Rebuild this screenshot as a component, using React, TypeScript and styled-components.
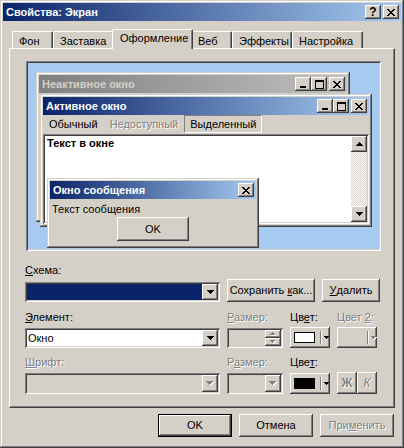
import React from "react";
import styled, { createGlobalStyle, css } from "styled-components";

const FACE = "#d4d0c8";
const SHADOW = "#808080";
const DARK = "#404040";
const LIGHT = "#ffffff";

const raised = css`
  box-shadow:
    inset -1px -1px ${DARK},
    inset 1px 1px ${LIGHT},
    inset -2px -2px ${SHADOW};
`;

const frame = css`
  box-shadow:
    inset -1px -1px ${DARK},
    inset 1px 1px ${FACE},
    inset -2px -2px ${SHADOW},
    inset 2px 2px ${LIGHT};
`;

const sunken = css`
  box-shadow:
    inset 1px 1px ${SHADOW},
    inset -1px -1px ${LIGHT},
    inset 2px 2px ${DARK},
    inset -2px -2px ${FACE};
`;

const disabledText = css`
  color: ${SHADOW};
  text-shadow: 1px 1px ${LIGHT};
`;

const GlobalStyle = createGlobalStyle`
  html, body { margin: 0; padding: 0; background: #fff; }
  body {
    font-family: "Liberation Sans", Arial, sans-serif;
    font-size: 11px;
    line-height: 13px;
    color: #000;
  }
  * { box-sizing: border-box; }
`;

// pixel glyphs for the caption and arrow buttons
const CLOSE = ["##....##", ".##..##.", "..####..", "...##...", "..####..", ".##..##.", "##....##"];
const MINIMIZE = ["......", "......", "......", "......", "......", "######", "######"];
const MAXIMIZE = [
  "#########",
  "#########",
  "#.......#",
  "#.......#",
  "#.......#",
  "#.......#",
  "#.......#",
  "#.......#",
  "#########",
];
const DOWN = ["#######", ".#####.", "..###..", "...#..."];
const UP = [...DOWN].reverse();
const SMALL_DOWN = ["#####", ".###.", "..#.."];
const SMALL_UP = [...SMALL_DOWN].reverse();

const PixSvg = styled.svg`
  display: block;
  flex: none;
`;

const Pix = ({ rows, emboss }: { rows: string[]; emboss?: boolean }) => {
  const cells: [number, number][] = [];
  rows.forEach((r, y) => [...r].forEach((c, x) => c === "#" && cells.push([x, y])));
  const extra = emboss ? 1 : 0;
  return (
    <PixSvg width={rows[0].length + extra} height={rows.length + extra} shapeRendering="crispEdges">
      {emboss &&
        cells.map(([x, y]) => <rect key={`e${x}-${y}`} x={x + 1} y={y + 1} width={1} height={1} fill={LIGHT} />)}
      {cells.map(([x, y]) => (
        <rect key={`${x}-${y}`} x={x} y={y} width={1} height={1} fill={emboss ? SHADOW : "#000"} />
      ))}
    </PixSvg>
  );
};

const Dialog = styled.div`
  width: 404px;
  height: 448px;
  padding: 3px;
  background: ${FACE};
  display: flex;
  flex-direction: column;
  ${frame}
`;

const TitleBar = styled.div<{ $inactive?: boolean }>`
  flex: none;
  height: 18px;
  display: flex;
  align-items: center;
  padding: 0 2px 0 3px;
  background: ${(p) =>
    p.$inactive
      ? `linear-gradient(to right, ${SHADOW}, #c0c0c0)`
      : "linear-gradient(to right, #0a246a, #a6caf0)"};
  color: ${(p) => (p.$inactive ? FACE : LIGHT)};
  font-weight: bold;
  white-space: nowrap;
`;

const TitleText = styled.span`
  flex: 1;
  overflow: hidden;
`;

const CaptionButtons = styled.div`
  display: flex;
  gap: 2px;
`;

const CaptionGroup = styled.div`
  display: flex;
`;

const CaptionButton = styled.div`
  width: 16px;
  height: 14px;
  display: flex;
  align-items: center;
  justify-content: center;
  background: ${FACE};
  color: #000;
  font-weight: bold;
  font-size: 12px;
  ${raised}
`;

const Body = styled.div`
  flex: 1;
  display: flex;
  flex-direction: column;
  padding: 8px 6px 0 6px;
`;

const TabRow = styled.div`
  display: flex;
  align-items: flex-end;
  height: 20px;
  margin-bottom: -1px;
  padding-left: 3px;
  position: relative;
  z-index: 1;
`;

const Tab = styled.div<{ $w: number; $active?: boolean }>`
  width: ${(p) => (p.$active ? p.$w + 4 : p.$w)}px;
  height: ${(p) => (p.$active ? 20 : 17)}px;
  margin: ${(p) => (p.$active ? "0 -2px" : "0 0 1px")};
  padding: ${(p) => (p.$active ? "2px 0 0 7px" : "3px 0 0 6px")};
  position: relative;
  z-index: ${(p) => (p.$active ? 1 : 0)};
  background: ${FACE};
  border-top: 1px solid ${LIGHT};
  border-left: 1px solid ${LIGHT};
  border-right: 1px solid ${DARK};
  border-radius: 2px 2px 0 0;
  box-shadow: inset -1px 0 ${SHADOW};
  white-space: nowrap;
`;

const Panel = styled.div`
  height: 360px;
  flex: none;
  padding: 12px 13px 0 15px;
  border: 1px solid;
  border-color: ${LIGHT} ${DARK} ${DARK} ${LIGHT};
  box-shadow: inset -1px -1px ${SHADOW};
  display: flex;
  flex-direction: column;
`;

const Preview = styled.div`
  position: relative;
  flex: none;
  width: 355px;
  height: 190px;
  margin-left: 1px;
  background: #a6caf0;
  ${sunken}
`;

const PreviewWindow = styled.div<{ $x: number; $y: number; $w: number; $h: number }>`
  position: absolute;
  left: ${(p) => p.$x}px;
  top: ${(p) => p.$y}px;
  width: ${(p) => p.$w}px;
  height: ${(p) => p.$h}px;
  padding: 3px;
  background: ${FACE};
  display: flex;
  flex-direction: column;
  ${frame}
`;

const MenuBar = styled.div`
  display: flex;
  height: 19px;
  padding-bottom: 1px;
  flex: none;
`;

const MenuItem = styled.div<{ $state?: "disabled" | "selected" }>`
  display: flex;
  align-items: center;
  padding: 0 6px;
  white-space: nowrap;
  ${(p) => p.$state === "disabled" && disabledText}
  ${(p) =>
    p.$state === "selected" &&
    css`
      padding: 0 5px;
      border: 1px solid;
      border-color: ${SHADOW} ${LIGHT} ${LIGHT} ${SHADOW};
    `}
`;

const ClientArea = styled.div`
  flex: 1;
  display: flex;
  padding: 2px;
  background: ${LIGHT};
  ${sunken}
`;

const ClientText = styled.div`
  flex: 1;
  padding: 1px 2px;
  font-weight: bold;
`;

const ScrollBar = styled.div`
  width: 16px;
  display: flex;
  flex-direction: column;
`;

const ScrollButton = styled.div`
  height: 16px;
  flex: none;
  display: flex;
  align-items: center;
  justify-content: center;
  background: ${FACE};
  ${raised}
`;

const ScrollTrack = styled.div`
  flex: 1;
  background: repeating-conic-gradient(${FACE} 0 25%, ${LIGHT} 0 50%) 0 0 / 2px 2px;
`;

const MessageBody = styled.div`
  flex: 1;
  display: flex;
  flex-direction: column;
  align-items: center;
`;

const MessageText = styled.div`
  align-self: stretch;
  padding: 4px 0 0 2px;
`;

const PushButton = styled.div<{ $w: number; $h?: number; $default?: boolean; $disabled?: boolean }>`
  width: ${(p) => p.$w}px;
  height: ${(p) => p.$h ?? 23}px;
  flex: none;
  display: flex;
  align-items: center;
  justify-content: center;
  background: ${FACE};
  white-space: nowrap;
  ${raised}
  ${(p) =>
    p.$default &&
    css`
      border: 1px solid #000;
    `}
  ${(p) => p.$disabled && disabledText}
`;

const MessageOk = styled(PushButton)`
  margin-top: 1px;
`;

const FormGrid = styled.div`
  margin-top: 13px;
  display: grid;
  grid-template-columns: 195px 56px 40px 43px;
  grid-template-rows: 13px 25px 22px 24px 21px 25px;
  column-gap: 7px;
  align-items: end;
`;

const FieldLabel = styled.div<{ $disabled?: boolean; $wide?: boolean }>`
  white-space: nowrap;
  ${(p) => p.$wide && "grid-column: 1 / -1;"}
  ${(p) => p.$disabled && disabledText}
`;

const U = styled.span`
  text-decoration: underline;
`;

const Combo = styled.div<{ $disabled?: boolean; $h?: number }>`
  height: ${(p) => p.$h ?? 20}px;
  padding: 2px;
  display: flex;
  background: ${(p) => (p.$disabled ? FACE : LIGHT)};
  ${sunken}
`;

const ComboValue = styled.div<{ $selected?: boolean }>`
  flex: 1;
  display: flex;
  align-items: center;
  padding-left: 1px;
  ${(p) =>
    p.$selected &&
    css`
      background: #0a246a;
      color: ${LIGHT};
    `}
`;

const DropButton = styled.div`
  width: 16px;
  flex: none;
  display: flex;
  align-items: center;
  justify-content: center;
  background: ${FACE};
  ${raised}
`;

const SpinButtons = styled.div`
  width: 16px;
  flex: none;
  display: flex;
  flex-direction: column;
`;

const SpinButton = styled.div`
  flex: 1;
  display: flex;
  align-items: center;
  justify-content: center;
  background: ${FACE};
  ${raised}
`;

const ButtonPair = styled.div`
  grid-column: span 3;
  display: flex;
  justify-content: space-between;
`;

const ColorButton = styled.div`
  width: 40px;
  height: 21px;
  display: flex;
  align-items: center;
  padding-left: 4px;
  background: ${FACE};
  ${raised}
`;

const Swatch = styled.div<{ $color?: string }>`
  width: 21px;
  height: 11px;
  border: 1px solid ${(p) => (p.$color ? "#000" : "transparent")};
  background: ${(p) => p.$color ?? "transparent"};
`;

const SplitLine = styled.div`
  width: 2px;
  height: 13px;
  margin: 0 2px 0 5px;
  border-left: 1px solid ${SHADOW};
  border-right: 1px solid ${LIGHT};
`;

const StylePair = styled.div`
  display: flex;
`;

const StyleButton = styled.div<{ $italic?: boolean }>`
  width: 20px;
  height: 22px;
  display: flex;
  align-items: center;
  justify-content: center;
  background: ${FACE};
  font-size: 12px;
  font-weight: ${(p) => (p.$italic ? "normal" : "bold")};
  font-style: ${(p) => (p.$italic ? "italic" : "normal")};
  ${disabledText}
  ${raised}
`;

const Footer = styled.div`
  display: flex;
  justify-content: flex-end;
  gap: 7px;
  margin-top: 6px;
  padding-right: 1px;
`;

const TABS = [
  { label: "Фон", w: 41 },
  { label: "Заставка", w: 61 },
  { label: "Оформление", w: 77, active: true },
  { label: "Веб", w: 41 },
  { label: "Эффекты", w: 60 },
  { label: "Настройка", w: 71 },
];

const WindowControls = () => (
  <CaptionButtons>
    <CaptionGroup>
      <CaptionButton>
        <Pix rows={MINIMIZE} />
      </CaptionButton>
      <CaptionButton>
        <Pix rows={MAXIMIZE} />
      </CaptionButton>
    </CaptionGroup>
    <CaptionButton>
      <Pix rows={CLOSE} />
    </CaptionButton>
  </CaptionButtons>
);

const ColorPicker = ({ color, disabled }: { color?: string; disabled?: boolean }) => (
  <ColorButton>
    <Swatch $color={color} />
    <SplitLine />
    <Pix rows={SMALL_DOWN} emboss={disabled} />
  </ColorButton>
);

export default function App() {
  return (
    <>
      <GlobalStyle />
      <Dialog>
        <TitleBar>
          <TitleText>Свойства: Экран</TitleText>
          <CaptionButtons>
            <CaptionButton>?</CaptionButton>
            <CaptionButton>
              <Pix rows={CLOSE} />
            </CaptionButton>
          </CaptionButtons>
        </TitleBar>

        <Body>
          <TabRow>
            {TABS.map((t) => (
              <Tab key={t.label} $w={t.w} $active={t.active}>
                {t.label}
              </Tab>
            ))}
          </TabRow>

          <Panel>
            <Preview>
              <PreviewWindow $x={10} $y={11} $w={314} $h={150}>
                <TitleBar $inactive>
                  <TitleText>Неактивное окно</TitleText>
                  <WindowControls />
                </TitleBar>
              </PreviewWindow>

              <PreviewWindow $x={14} $y={33} $w={332} $h={133}>
                <TitleBar>
                  <TitleText>Активное окно</TitleText>
                  <WindowControls />
                </TitleBar>
                <MenuBar>
                  <MenuItem>Обычный</MenuItem>
                  <MenuItem $state="disabled">Недоступный</MenuItem>
                  <MenuItem $state="selected">Выделенный</MenuItem>
                </MenuBar>
                <ClientArea>
                  <ClientText>Текст в окне</ClientText>
                  <ScrollBar>
                    <ScrollButton>
                      <Pix rows={UP} />
                    </ScrollButton>
                    <ScrollTrack />
                    <ScrollButton>
                      <Pix rows={DOWN} />
                    </ScrollButton>
                  </ScrollBar>
                </ClientArea>
              </PreviewWindow>

              <PreviewWindow $x={21} $y={117} $w={212} $h={70}>
                <TitleBar>
                  <TitleText>Окно сообщения</TitleText>
                  <CaptionButton>
                    <Pix rows={CLOSE} />
                  </CaptionButton>
                </TitleBar>
                <MessageBody>
                  <MessageText>Текст сообщения</MessageText>
                  <MessageOk $w={72} $h={24}>
                    OK
                  </MessageOk>
                </MessageBody>
              </PreviewWindow>
            </Preview>

            <FormGrid>
              <FieldLabel $wide>
                <U>С</U>хема:
              </FieldLabel>

              <Combo>
                <ComboValue $selected />
                <DropButton>
                  <Pix rows={DOWN} />
                </DropButton>
              </Combo>
              <ButtonPair>
                <PushButton $w={88}>
                  Сохранить&nbsp;<U>к</U>ак...
                </PushButton>
                <PushButton $w={58}>
                  <U>У</U>далить
                </PushButton>
              </ButtonPair>

              <FieldLabel>
                <U>Э</U>лемент:
              </FieldLabel>
              <FieldLabel $disabled>
                <U>Р</U>азмер:
              </FieldLabel>
              <FieldLabel>
                Цв<U>е</U>т:
              </FieldLabel>
              <FieldLabel $disabled>
                Цвет <U>2</U>:
              </FieldLabel>

              <Combo>
                <ComboValue>Окно</ComboValue>
                <DropButton>
                  <Pix rows={DOWN} />
                </DropButton>
              </Combo>
              <Combo $disabled>
                <ComboValue />
                <SpinButtons>
                  <SpinButton>
                    <Pix rows={SMALL_UP} emboss />
                  </SpinButton>
                  <SpinButton>
                    <Pix rows={SMALL_DOWN} emboss />
                  </SpinButton>
                </SpinButtons>
              </Combo>
              <ColorPicker color={LIGHT} />
              <ColorPicker disabled />

              <FieldLabel $disabled>
                <U>Ш</U>рифт:
              </FieldLabel>
              <FieldLabel $disabled>
                Р<U>а</U>змер:
              </FieldLabel>
              <FieldLabel>
                Цве<U>т</U>:
              </FieldLabel>
              <div />

              <Combo $disabled $h={21}>
                <ComboValue />
                <DropButton>
                  <Pix rows={DOWN} emboss />
                </DropButton>
              </Combo>
              <Combo $disabled $h={21}>
                <ComboValue />
                <DropButton>
                  <Pix rows={DOWN} emboss />
                </DropButton>
              </Combo>
              <ColorPicker color="#000" />
              <StylePair>
                <StyleButton>Ж</StyleButton>
                <StyleButton $italic>К</StyleButton>
              </StylePair>
            </FormGrid>
          </Panel>

          <Footer>
            <PushButton $w={74} $default>
              OK
            </PushButton>
            <PushButton $w={74}>Отмена</PushButton>
            <PushButton $w={74} $disabled>
              При<U>м</U>енить
            </PushButton>
          </Footer>
        </Body>
      </Dialog>
    </>
  );
}
